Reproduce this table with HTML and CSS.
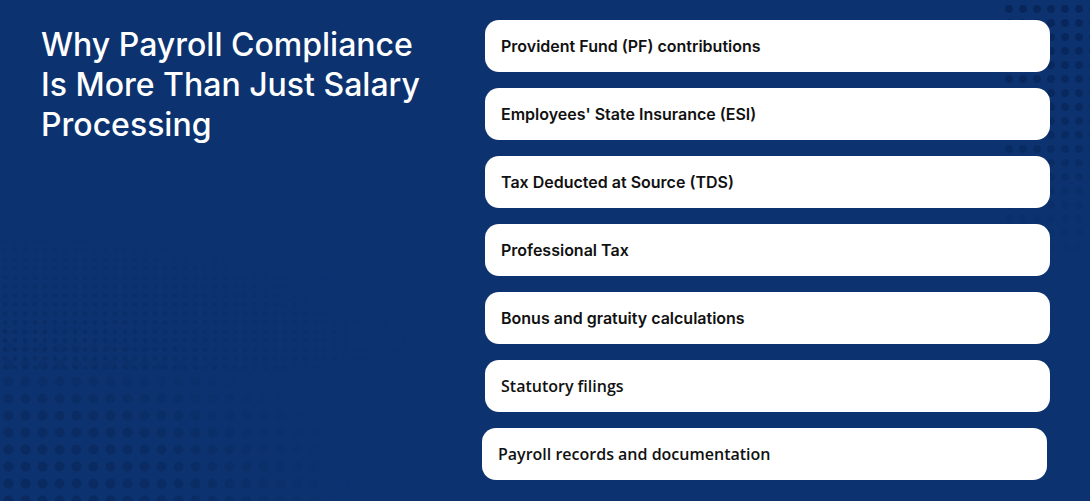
FILE: index.html
```html
<!DOCTYPE html>
<html lang="en">
<head>
<meta charset="utf-8">
<title>Why Payroll Compliance Is More Than Just Salary Processing</title>
<link rel="stylesheet" href="styles.css">
</head>
<body>
<main class="page">
  <div class="dots dots-big" aria-hidden="true"></div>
  <div class="dots dots-small" aria-hidden="true"></div>
  <div class="dots dots-corner" aria-hidden="true"></div>
  <section class="intro">
    <h1 class="title">Why Payroll Compliance Is More Than Just Salary Processing</h1>
  </section>
  <ul class="list">
    <li class="card">Provident Fund (PF) contributions</li>
    <li class="card">Employees' State Insurance (ESI)</li>
    <li class="card">Tax Deducted at Source (TDS)</li>
    <li class="card">Professional Tax</li>
    <li class="card">Bonus and gratuity calculations</li>
    <li class="card card-alt">Statutory filings</li>
    <li class="card card-alt card-shift">Payroll records and documentation</li>
  </ul>
</main>
</body>
</html>
```
FILE: styles.css
```css
* { box-sizing: border-box; }

html, body {
  margin: 0;
  padding: 0;
  height: 100%;
}

body {
  background: #0c3370;
  font-family: "Inter", "Liberation Sans", sans-serif;
  overflow: hidden;
}

.page {
  position: relative;
  display: flex;
  width: 1090px;
  height: 501px;
  overflow: hidden;
}

.dots {
  position: absolute;
  pointer-events: none;
  z-index: 0;
}

.dots-big {
  left: 0;
  bottom: 0;
  width: 520px;
  height: 200px;
  background-image: radial-gradient(circle, #0a2a60 0, #0a2a60 4.5px, transparent 5.5px);
  background-size: 17px 17px;
  background-position: 0 4px;
  -webkit-mask-image: radial-gradient(ellipse 75% 100% at 0% 100%, #000 0%, rgba(0,0,0,.75) 45%, transparent 90%);
  mask-image: radial-gradient(ellipse 75% 100% at 0% 100%, #000 0%, rgba(0,0,0,.75) 45%, transparent 90%);
}

.dots-small {
  left: 0;
  top: 210px;
  width: 480px;
  height: 160px;
  background-image: radial-gradient(circle, #0a2a60 0, #0a2a60 1.8px, transparent 2.8px);
  background-size: 10px 9px;
  -webkit-mask-image: radial-gradient(ellipse 100% 90% at 0% 85%, rgba(0,0,0,.7) 0%, rgba(0,0,0,.35) 50%, transparent 85%);
  mask-image: radial-gradient(ellipse 100% 90% at 0% 85%, rgba(0,0,0,.7) 0%, rgba(0,0,0,.35) 50%, transparent 85%);
}

.dots-corner {
  right: 0;
  top: 0;
  width: 90px;
  height: 260px;
  background-image: radial-gradient(circle, #08265a 0, #08265a 3.5px, transparent 4.5px);
  background-size: 14px 14px;
  background-position: 2px 2px;
  -webkit-mask-image: linear-gradient(to bottom, #000 0%, rgba(0,0,0,.7) 45%, transparent 100%);
  mask-image: linear-gradient(to bottom, #000 0%, rgba(0,0,0,.7) 45%, transparent 100%);
}

.intro {
  position: relative;
  z-index: 1;
  width: 485px;
  padding: 25px 0 0 41px;
}

.title {
  margin: 0;
  width: 395px;
  color: #ffffff;
  font-size: 32px;
  line-height: 40px;
  font-weight: 500;
  letter-spacing: 0;
}

.list {
  position: relative;
  z-index: 1;
  list-style: none;
  margin: 0;
  padding: 20px 0 0 0;
  width: 565px;
  display: flex;
  flex-direction: column;
  gap: 16px;
}

.card {
  height: 52px;
  background: #ffffff;
  border-radius: 14px;
  padding: 0 16px;
  display: flex;
  align-items: center;
  color: #111111;
  font-size: 16px;
  font-weight: 600;
  letter-spacing: 0;
}

.card-alt {
  font-family: "Open Sans", "Liberation Sans", sans-serif;
  font-weight: 600;
  letter-spacing: 0;
  font-size: 16px;
}

.card-shift {
  margin-left: -3px;
  width: 565px;
}
```
